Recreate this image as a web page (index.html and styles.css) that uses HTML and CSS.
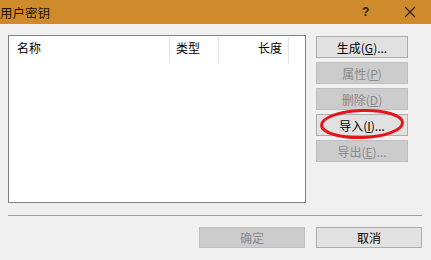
FILE: index.html
```html
<!DOCTYPE html>
<html lang="zh-CN">
  <head>
    <meta charset="UTF-8" />
    <meta name="viewport" content="width=device-width, initial-scale=1.0" />
    <title>用户密钥</title>
    <link rel="stylesheet" href="styles.css">
  </head>
  <body>
    <div class="titlebar">
      <span class="title">用户密钥</span>
      <span class="help">?</span>
      <span class="close">
        <svg width="12" height="12" viewBox="0 0 12 12">
          <path d="M1 1 L11 11 M11 1 L1 11" stroke="#2b1a06" stroke-width="1.1" fill="none" />
        </svg>
      </span>
    </div>

    <div class="content">
      <div class="keylist">
        <div class="list-head">
          <div class="col col-name">名称</div>
          <div class="col col-type">类型</div>
          <div class="col col-len">长度</div>
        </div>
      </div>

      <div class="side">
        <button class="btn">生成(<u>G</u>)...</button>
        <button class="btn" disabled>属性(<u>P</u>)</button>
        <button class="btn" disabled>删除(<u>D</u>)</button>
        <div class="import-wrap">
          <button class="btn">导入(<u>I</u>)...</button>
          <svg class="mark" width="88" height="34" viewBox="0 0 88 34">
            <ellipse cx="44" cy="17" rx="40.5" ry="13.5" transform="rotate(-2 44 17)"
              stroke="#e3161b" stroke-width="3" fill="none" />
          </svg>
        </div>
        <button class="btn" disabled>导出(<u>E</u>)...</button>
      </div>
    </div>

    <div class="sep"></div>

    <div class="footer">
      <button class="btn wide" disabled>确定</button>
      <button class="btn wide">取消</button>
    </div>
  </body>
</html>
```

FILE: styles.css
```css
body {
  margin: 0;
  padding: 0;
  width: 431px;
  height: 260px;
  background-color: #f0f0f0;
  font-family: "Noto Sans CJK SC", "Noto Sans", sans-serif;
  font-size: 12px;
  color: #000;
  overflow: hidden;
}
.titlebar {
  height: 24px;
  background-color: #cf8a2c;
  display: flex;
  align-items: center;
}
.title {
  flex: 1;
  font-size: 12.5px;
  color: #1a1205;
}
.help {
  width: 12px;
  font-family: "Liberation Sans", sans-serif;
  font-size: 12px;
  font-weight: bold;
  color: #2b1a06;
  margin-right: 30px;
}
.close {
  display: flex;
  margin-right: 15px;
}
.content {
  display: flex;
  padding: 11px 0 0 8px;
  gap: 10px;
}
.keylist {
  width: 296px;
  height: 166px;
  background: white;
  border: 1px solid #828282;
}
.list-head {
  display: flex;
  height: 27px;
  margin-top: 1px;
}
.col {
  border-right: 1px solid #e5e5e5;
  line-height: 22px;
  box-sizing: border-box;
}
.col-name {
  width: 161px;
  padding-left: 8px;
}
.col-type {
  width: 49px;
  padding-left: 6px;
}
.col-len {
  width: 70px;
  text-align: right;
  padding-right: 6px;
}
.side {
  display: flex;
  flex-direction: column;
  gap: 4px;
  width: 92px;
  padding-top: 1px;
}
.btn {
  height: 22px;
  padding: 0;
  background-color: #e1e1e1;
  border: 1px solid #adadad;
  font-family: "Noto Sans CJK SC", "Noto Sans", sans-serif;
  font-size: 12px;
  color: #000;
  box-sizing: border-box;
}
.btn:disabled {
  background-color: #cccccc;
  border-color: #bfbfbf;
  color: #8a8a8a;
}
.side .btn {
  width: 92px;
}
.import-wrap {
  position: relative;
  height: 22px;
}
.mark {
  position: absolute;
  left: 2px;
  top: -7px;
}
.sep {
  margin: 12px 9px 0 8px;
  height: 1px;
  background-color: #a0a0a0;
}
.footer {
  display: flex;
  justify-content: flex-end;
  gap: 11px;
  padding: 11px 9px 0 0;
}
.btn.wide {
  width: 106px;
  height: 21px;
}
```
